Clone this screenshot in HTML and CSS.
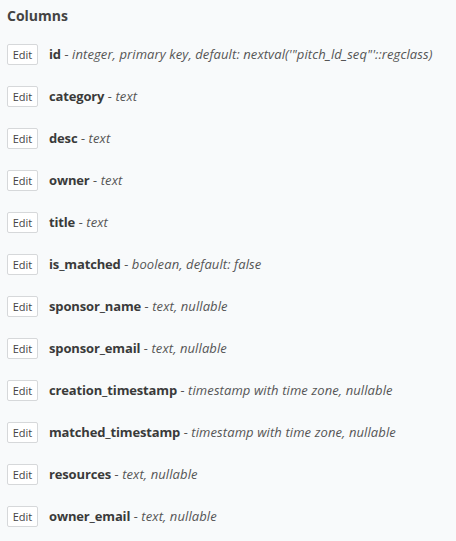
FILE: index.html
```html
<!DOCTYPE html>
<html>
<head>
<meta charset="utf-8">
<link rel="stylesheet" href="styles.css">
</head>
<body>
<div class="panel">
  <h3 class="title">Columns</h3>
  <ul class="cols">
    <li class="row"><button class="edit">Edit</button><span class="name">id</span><span class="meta">&nbsp;- integer, primary key, default: nextval('"pitch_ld_seq"'::regclass)</span></li>
    <li class="row"><button class="edit">Edit</button><span class="name">category</span><span class="meta">&nbsp;- text</span></li>
    <li class="row"><button class="edit">Edit</button><span class="name">desc</span><span class="meta">&nbsp;- text</span></li>
    <li class="row"><button class="edit">Edit</button><span class="name">owner</span><span class="meta">&nbsp;- text</span></li>
    <li class="row"><button class="edit">Edit</button><span class="name">title</span><span class="meta">&nbsp;- text</span></li>
    <li class="row"><button class="edit">Edit</button><span class="name">is_matched</span><span class="meta">&nbsp;- boolean, default: false</span></li>
    <li class="row"><button class="edit">Edit</button><span class="name">sponsor_name</span><span class="meta">&nbsp;- text, nullable</span></li>
    <li class="row"><button class="edit">Edit</button><span class="name">sponsor_email</span><span class="meta">&nbsp;- text, nullable</span></li>
    <li class="row"><button class="edit">Edit</button><span class="name">creation_timestamp</span><span class="meta">&nbsp;- timestamp with time zone, nullable</span></li>
    <li class="row"><button class="edit">Edit</button><span class="name">matched_timestamp</span><span class="meta">&nbsp;- timestamp with time zone, nullable</span></li>
    <li class="row"><button class="edit">Edit</button><span class="name">resources</span><span class="meta">&nbsp;- text, nullable</span></li>
    <li class="row"><button class="edit">Edit</button><span class="name">owner_email</span><span class="meta">&nbsp;- text, nullable</span></li>
  </ul>
</div>
</body>
</html>
```
FILE: styles.css
```css
html, body {
  margin: 0;
  padding: 0;
  background: #f8fafb;
}
body {
  font-family: "Open Sans", "Noto Sans", sans-serif;
  color: #333;
}
.panel {
  padding: 4px 7px 0 7px;
}
.title {
  margin: 0;
  font-size: 14px;
  font-weight: 700;
  color: #444;
  line-height: 24px;
}
.cols {
  list-style: none;
  margin: 0;
  padding: 5px 0 0 0;
}
.row {
  display: flex;
  align-items: center;
  height: 42px;
  font-size: 13px;
  white-space: nowrap;
}
.edit {
  box-sizing: border-box;
  width: 31px;
  height: 21px;
  padding: 0;
  margin: 0 11px 0 0;
  background: #fff;
  border: 1px solid #d6d8da;
  border-radius: 2px;
  font-family: inherit;
  font-size: 11px;
  color: #444;
}
.name {
  font-weight: 700;
  color: #3a3a3a;
  letter-spacing: -0.15px;
}
.meta {
  font-style: italic;
  color: #555;
  letter-spacing: 0.1px;
}
```
